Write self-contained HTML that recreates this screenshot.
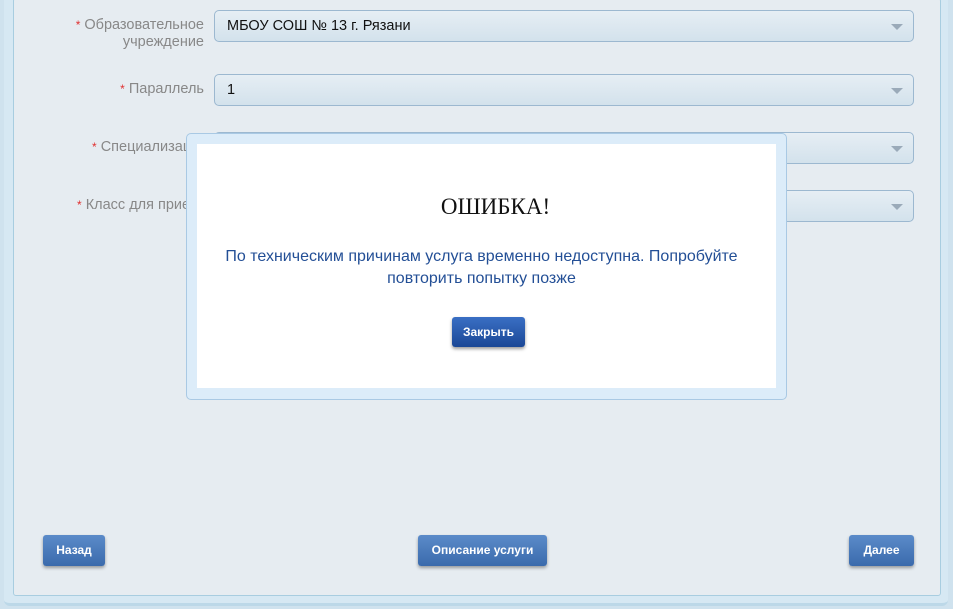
<!DOCTYPE html>
<html><head><meta charset="utf-8"><style>
body{margin:0;width:953px;height:609px;overflow:hidden;background:#cfe2ee;font-family:"Liberation Sans",sans-serif;position:relative}
.outer{position:absolute;left:4px;top:-5px;width:944px;height:608px;background:#d6e8f3;border-radius:6px;border-bottom:3px solid #bcd8e8}
.panel{position:absolute;left:13px;top:-2px;width:926px;height:596px;background:#e6ecf1;border:1px solid #a8cde0;border-radius:3px}
.lbl{position:absolute;right:749px;text-align:right;color:#888;font-size:14.5px;line-height:17px}
.lbl b{color:#e03030;font-weight:normal;font-size:12px}
.sel{position:absolute;left:214px;border:1px solid #9cb8d0;border-radius:5px;background:linear-gradient(#e6eef4,#d3e2ec);font-size:14.5px;color:#111;line-height:30px;padding-left:12px;box-sizing:border-box;width:700px;height:32px}
.sel:after{content:"";position:absolute;right:10px;top:13px;border-left:6px solid transparent;border-right:6px solid transparent;border-top:6px solid #9aaab9}
.btn{position:absolute;top:535px;height:31px;background:linear-gradient(#5b8bc9,#3a6aac);border-radius:3px;color:#fff;font-weight:bold;font-size:12px;line-height:31px;text-align:center;box-shadow:0 2px 3px rgba(0,0,0,.35)}
.modal{position:absolute;left:186px;top:133px;width:599px;height:265px;background:#dcecf9;border:1px solid #a9c9e4;border-radius:5px}
.inner{position:absolute;left:10px;top:10px;width:579px;height:244px;background:#fff;text-align:center}
</style></head><body>
<div class="outer"></div>
<div class="panel"></div>
<div class="lbl" style="top:17px"><b>*</b> Образовательное<br>учреждение</div>
<div class="lbl" style="top:81px"><b>*</b> Параллель</div>
<div class="lbl" style="top:139px;right:auto;left:92px"><b>*</b> Специализац</div>
<div class="lbl" style="top:197px;right:auto;left:77px"><b>*</b> Класс для прие</div>
<div class="sel" style="top:10px">МБОУ СОШ № 13 г. Рязани</div>
<div class="sel" style="top:74px">1</div>
<div class="sel" style="top:132px"></div>
<div class="sel" style="top:190px"></div>
<div class="btn" style="left:43px;width:62px">Назад</div>
<div class="btn" style="left:418px;width:129px">Описание услуги</div>
<div class="btn" style="left:849px;width:65px">Далее</div>
<div class="modal"><div class="inner">
<div style="position:absolute;top:50px;left:9px;width:100%;font-family:'Liberation Serif',serif;font-size:23px;color:#111">ОШИБКА!</div>
<div style="position:absolute;top:102px;left:-5px;width:100%;font-size:16px;line-height:22px;color:#234f96">По техническим причинам услуга временно недоступна. Попробуйте<br>повторить попытку позже</div>
<div style="position:absolute;left:255px;top:173px;width:73px;height:30px;border-radius:3px;background:linear-gradient(#3a6fc4,#1a4796);color:#fff;font-weight:bold;font-size:12px;line-height:30px;box-shadow:0 2px 3px rgba(0,0,0,.4)">Закрыть</div>
</div></div>
</body></html>
